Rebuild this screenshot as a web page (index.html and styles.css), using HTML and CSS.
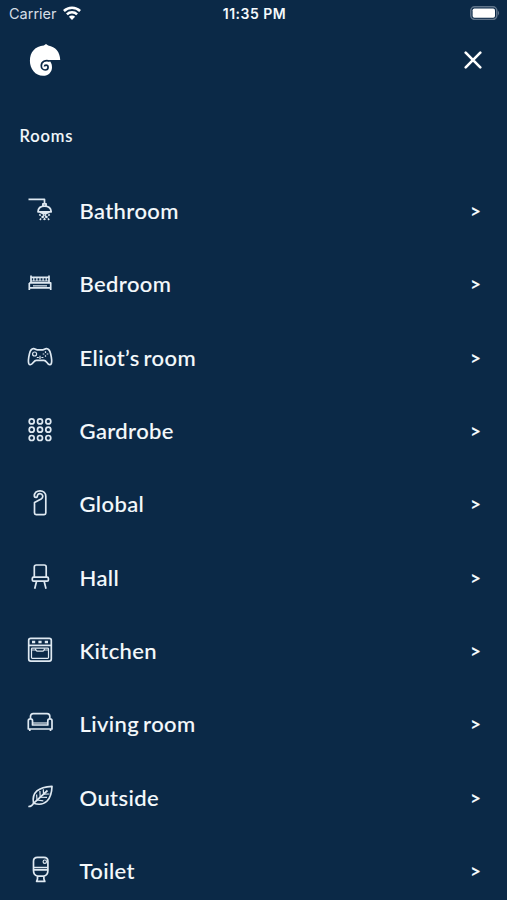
FILE: index.html
```html
<!DOCTYPE html>
<html lang="en">
<head>
    <meta charset="UTF-8">
    <title>Rooms</title>
    <link rel="stylesheet" href="styles.css">
</head>
<body>
<div class="status-bar">
    <div class="carrier">
        <span>Carrier</span>
        <svg class="wifi" viewBox="0 0 18 14">
            <path d="M.9 5a11.500 11.500 0 0 1 16.200 0M3.900 8.300a7.200 7.200 0 0 1 10.200 0"/>
            <path class="solid" d="M5.900 10.700a4.300 4.300 0 0 1 6.200 0L9 13.900z"/>
        </svg>
    </div>
    <span class="time">11:35 PM</span>
    <svg class="battery" viewBox="0 0 30 14">
        <rect class="shell" x=".8" y=".8" width="26" height="12.600" rx="3.800"/>
        <rect class="charge" x="2.600" y="2.500" width="22.400" height="9.300" rx="1.800"/>
        <path class="tip" d="M28 4.800q2.200 2.200 0 4.600z"/>
    </svg>
</div>
<header>
    <svg class="logo" viewBox="0 0 32 34">
        <path d="M14.800 2.600L17 1l2.200 1.500C26.500 3.800 31.200 9.200 31.200 17.100H19.500C21.800 18.700 23 21 23 24.200c0 4.900-3.700 8.600-8.900 8.600C6.200 32.800 .9 26 .9 17.800 .9 9.400 6.200 3.200 14.800 2.600z"/>
        <path class="swirl" d="M20.800 18.200C16.500 16.400 12.300 18.800 12.300 22.700c0 2.500 1.700 4.300 3.800 4.300 1.800 0 3-1.200 3-2.700 0-1.300-.9-2.200-2.100-2.200-.9 0-1.500.6-1.500 1.400"/>
    </svg>
    <svg class="close" viewBox="0 0 18 18"><path d="M1.700 1.700l14.600 14.600M16.300 1.700L1.700 16.300"/></svg>
</header>
<h1>Rooms</h1>
<ul class="rooms">
    <li>
        <svg class="icon" viewBox="0 0 32 32">
            <path d="M4.500 5.300H20.500V10M18.900 12.500V9.800h3.200v2.700M14 17.800c.2-3.500 2.800-5.600 6.500-5.600s6.400 2.100 6.700 5.600zM16 18.300q4.500 2.300 9.200 0"/>
            <path class="drops" d="M15.300 20.300l3.200 3-3.200 3M18.800 20.300l3.400 3-3.200 3M22.200 20.300l-3.400 3 3.200 3M25.700 20.300l-3.200 3 3.200 3"/>
        </svg>
        <span class="name">Bathroom</span><span class="arrow">&gt;</span>
    </li>
    <li>
        <svg class="icon" viewBox="0 0 32 32">
            <path d="M7 8.500v7M25 8.500v7M7 10.300h18M5.300 15.900h21.400v7M5.300 15.900v7M5.300 20.900h21.400"/>
            <path class="fine" d="M9.800 11v3M12.900 11v3M16 11v3M19.100 11v3M22.200 11v3M7 14h18M9 18.800h14"/>
        </svg>
        <span class="name">Bedroom</span><span class="arrow">&gt;</span>
    </li>
    <li>
        <svg class="icon" viewBox="0 0 32 32">
            <path d="M9.500 7.600C6.900 7.900 6.200 9.600 5.500 12.600c-.8 3.400-1.600 7.800-.7 10 .7 1.500 2.300 1.300 3.300.2 1.600-1.700 2.400-3.500 4.200-3.500h7.600c1.800 0 2.600 1.800 4.200 3.500 1 1.100 2.600 1.300 3.200-.2.900-2.200.1-6.600-.7-10-.7-3-1.400-4.700-4.100-5-1.600-.2-2.200 1.200-3.700 1.200h-5.600c-1.500 0-2.100-1.400-3.700-1.200z"/>
            <circle class="fine" cx="10.600" cy="13" r="2"/>
            <path class="fine" d="M21.500 10.300v1.600M21.500 14.200v1.600M18.700 13h1.600M22.700 13h1.600M12.800 16.500h2M17.400 16.500h2M16 14.800v3.300"/>
        </svg>
        <span class="name">Eliot’s room</span><span class="arrow">&gt;</span>
    </li>
    <li>
        <svg class="icon" viewBox="0 0 32 32">
            <circle cx="7.700" cy="7.400" r="2.500"/><circle cx="16" cy="7.400" r="2.500"/><circle cx="24.300" cy="7.400" r="2.500"/>
            <circle cx="7.700" cy="15.700" r="2.500"/><circle cx="16" cy="15.700" r="2.500"/><circle cx="24.300" cy="15.700" r="2.500"/>
            <circle cx="7.700" cy="24" r="2.500"/><circle cx="16" cy="24" r="2.500"/><circle cx="24.300" cy="24" r="2.500"/>
        </svg>
        <span class="name">Gardrobe</span><span class="arrow">&gt;</span>
    </li>
    <li>
        <svg class="icon" viewBox="0 0 32 32">
            <path d="M10.300 9.300C10.300 5.800 12.600 3.800 16 3.800s5.800 2.300 5.800 5.500v16.700c0 1-.6 1.600-1.600 1.600h-8.100c-1 0-1.600-.6-1.600-1.600V15.600l6.600-3.500c1.700-1 1.800-2.400 1.500-3.500-.4-1.300-1.400-1.900-2.700-1.900-1.500 0-2.600 1-2.600 2.800 0 1.200-3 1.200-3-.2z"/>
        </svg>
        <span class="name">Global</span><span class="arrow">&gt;</span>
    </li>
    <li>
        <svg class="icon" viewBox="0 0 32 32">
            <path d="M10.300 16.300V6c0-1.200.8-2 2-2h7.900c1.200 0 2 .8 2 2v10.300"/>
            <rect x="8.300" y="16.200" width="16.100" height="4" rx="1.300"/>
            <path d="M12.500 20.500L10.700 27.800M20.200 20.500l1.800 7.300"/>
        </svg>
        <span class="name">Hall</span><span class="arrow">&gt;</span>
    </li>
    <li>
        <svg class="icon" viewBox="0 0 32 32">
            <rect x="4.700" y="4.300" width="22.600" height="22.800" rx="2"/>
            <path d="M5 11.400h22"/>
            <rect class="fine" x="7.500" y="14.200" width="17" height="10.200" rx=".8"/>
            <path class="fine" d="M11.500 14.500c.2 1.800.8 2.700 1.800 2.700h5.400c1 0 1.600-.9 1.800-2.700M7.500 16h3.800M20.700 16h3.800"/>
            <path class="knobs" d="M8 8h3.200M14.400 8h3.200M20.800 8H24"/>
        </svg>
        <span class="name">Kitchen</span><span class="arrow">&gt;</span>
    </li>
    <li>
        <svg class="icon" viewBox="0 0 32 32">
            <path d="M6.500 11.700V9.300c0-1.700 1-2.700 2.700-2.700h13.900c1.700 0 2.700 1 2.700 2.700v2.400M8.500 18v-4.200c0-2.600-4.200-2.600-4.200 0v8.200H28v-8.200c0-2.600-4.200-2.600-4.200 0V18zM5.800 22v2M26.500 22v2"/>
            <path class="fine" d="M8.500 16h15.300"/>
        </svg>
        <span class="name">Living room</span><span class="arrow">&gt;</span>
    </li>
    <li>
        <svg class="icon" viewBox="0 0 32 32">
            <path d="M4.300 25.500c2.700.2 4-1 5.200-3.200C7.500 11.500 14.500 5.800 28 5.300c-.4 12.900-6.500 20.700-18.500 17L23.500 9.500"/>
            <path class="fine" d="M13 19l-.4-5.500M16.200 16.200l-.3-6.200M19.500 13.200l-.2-5M13 19l6.300.8M16.200 16.200l6.800.2M19.500 13.200l6-.2"/>
        </svg>
        <span class="name">Outside</span><span class="arrow">&gt;</span>
    </li>
    <li>
        <svg class="icon" viewBox="0 0 32 32">
            <path d="M9.500 13.500V7.200c0-2.500 1.500-3.800 4-3.800h6.400c2.500 0 4 1.300 4 3.800v6.300zM9.300 15.800h14.800M9.500 13.500v3c0 3.200 1.500 5 4 5.600V25l-.9 2.400h8.200L19.900 25v-2.900c2.500-.6 4-2.400 4-5.600v-3M13.500 22.100h6.400"/>
            <circle class="fine" cx="20.800" cy="7.700" r="1.700"/>
        </svg>
        <span class="name">Toilet</span><span class="arrow">&gt;</span>
    </li>
</ul>
</body>
</html>
```
FILE: styles.css
```css
body {
    margin: 0;
    height: 900px;
    overflow: hidden;
    background-color: #0b2947;
    color: #f5f9fc;
    font-family: Lato, "Liberation Sans", sans-serif;
}

svg {
    display: block;
    fill: none;
    stroke: currentColor;
}

.status-bar {
    display: grid;
    grid-template-columns: 1fr auto 1fr;
    align-items: center;
    height: 27px;
    padding: 0 7px 0 9px;
    font-family: Inter, "Liberation Sans", sans-serif;
    font-size: 14.5px;
}

.carrier {
    display: flex;
    align-items: center;
    gap: 6px;
    color: #d5dde5;
}

.wifi {
    width: 18px;
    height: 14px;
    margin-bottom: 1px;
    stroke: #fff;
    stroke-width: 2.5;
}

.wifi .solid {
    fill: #fff;
    stroke: none;
}

.time {
    font-weight: 600;
    font-size: 14px;
    letter-spacing: 0.5px;
}

.battery {
    width: 30px;
    height: 14px;
    justify-self: end;
    margin-bottom: 1px;
}

.battery .shell {
    stroke: #60758b;
    stroke-width: 1.5;
}

.battery .charge {
    fill: #fff;
    stroke: none;
}

.battery .tip {
    fill: #60758b;
    stroke: none;
}

header {
    display: flex;
    justify-content: space-between;
    align-items: center;
    height: 65px;
    padding: 0 25px 0 29px;
}

.logo {
    width: 32px;
    height: 34px;
    fill: #fff;
    stroke: none;
}

.logo .swirl {
    fill: none;
    stroke: #0b2947;
    stroke-width: 1.7;
}

.close {
    width: 18px;
    height: 18px;
    stroke: #fff;
    stroke-width: 2.6;
    stroke-linecap: round;
}

h1 {
    margin: 34px 0 0 19.5px;
    font-size: 16.5px;
    font-weight: 500;
    line-height: 20px;
    letter-spacing: 0.9px;
    -webkit-text-stroke: 0.15px currentColor;
}

.rooms {
    margin: 28px 0 0;
    padding: 0;
    list-style: none;
}

.rooms li {
    display: flex;
    align-items: center;
    height: 73.3px;
    padding: 0 26px 0 24px;
}

.icon {
    width: 32px;
    height: 32px;
    margin: 0 23.5px 1px 0;
    color: #dfe9f2;
    stroke-width: 1.7;
    stroke-linejoin: round;
}

.icon .fine {
    stroke-width: 1.2;
}

.icon .drops {
    stroke-width: 1.6;
    stroke-dasharray: 1.9 1.2;
}

.icon .knobs {
    stroke-width: 2.6;
}

.name {
    flex: 1;
    font-size: 22px;
    font-weight: 500;
    letter-spacing: 0.4px;
    word-spacing: -2px;
    -webkit-text-stroke: 0.1px currentColor;
}

.arrow {
    font-size: 19px;
    font-weight: 700;
}
```
